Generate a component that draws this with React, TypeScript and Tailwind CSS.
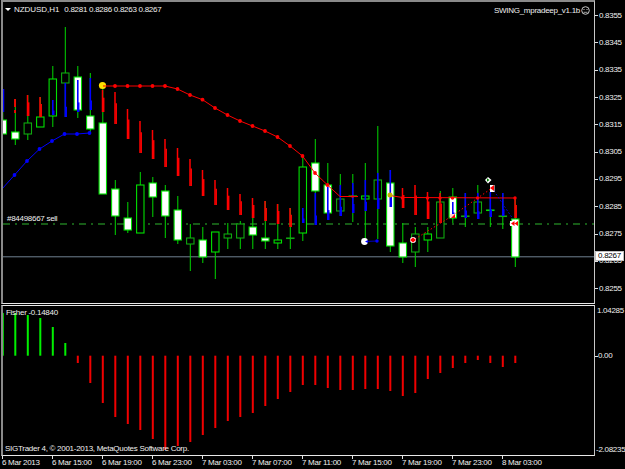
const font = { fontFamily: '"Liberation Sans", Arial, sans-serif' };

// i: bar index, h/l: wick ends, t/b: body ends (all in page pixels)
type Candle = { i: number; h: number; t: number; b: number; l: number; fill?: boolean; dark?: boolean };

const barX = (i: number) => 2.8 + i * 12.5;

const candles: Candle[] = [
  { i: 0, h: 112, t: 120, b: 134, l: 134, fill: true },
  { i: 1, h: 99, t: 132, b: 139, l: 145, fill: true },
  { i: 2, h: 95, t: 123, b: 134, l: 140, dark: true },
  { i: 3, h: 97, t: 117, b: 127, l: 127 },
  { i: 4, h: 66, t: 79, b: 116, l: 127 },
  { i: 5, h: 27, t: 73, b: 83, l: 117, dark: true },
  { i: 6, h: 66, t: 77, b: 110, l: 118, fill: true },
  { i: 7, h: 73, t: 116, b: 129, l: 133, fill: true },
  { i: 8, h: 86, t: 123, b: 194, l: 194, fill: true },
  { i: 9, h: 180, t: 189, b: 216, l: 235, fill: true },
  { i: 10, h: 202, t: 218, b: 230, l: 233, fill: true },
  { i: 11, h: 172, t: 185, b: 233, l: 233 },
  { i: 12, h: 177, t: 183, b: 197, l: 217, fill: true },
  { i: 13, h: 185, t: 191, b: 216, l: 238, fill: true },
  { i: 14, h: 196, t: 210, b: 240, l: 244, fill: true },
  { i: 15, h: 224, t: 238, b: 244, l: 271, dark: true },
  { i: 16, h: 227, t: 240, b: 257, l: 263, fill: true },
  { i: 17, h: 232, t: 232, b: 252, l: 279 },
  { i: 18, h: 223, t: 234, b: 238, l: 249, dark: true },
  { i: 19, h: 221, t: 224, b: 238, l: 249, dark: true },
  { i: 20, h: 206, t: 227, b: 235, l: 249, fill: true },
  { i: 21, h: 201, t: 238, b: 241, l: 249, fill: true },
  { i: 22, h: 204, t: 240, b: 243, l: 249 },
  { i: 23, h: 208, t: 238, b: 238.5, l: 249, dark: true },
  { i: 24, h: 157, t: 167, b: 233, l: 241 },
  { i: 25, h: 139, t: 163, b: 191, l: 225, fill: true },
  { i: 26, h: 163, t: 185, b: 213, l: 220, fill: true },
  { i: 27, h: 174, t: 199, b: 211, l: 216, dark: true },
  { i: 28, h: 174, t: 196, b: 196.5, l: 222 },
  { i: 29, h: 163, t: 196, b: 199, l: 243 },
  { i: 30, h: 126, t: 180, b: 199, l: 239, dark: true },
  { i: 31, h: 170, t: 183, b: 246, l: 252, fill: true },
  { i: 32, h: 223, t: 243, b: 257, l: 263, fill: true },
  { i: 33, h: 227, t: 234, b: 252, l: 267, dark: true },
  { i: 34, h: 227, t: 234, b: 240, l: 252 },
  { i: 35, h: 191, t: 202, b: 238, l: 238, dark: true },
  { i: 36, h: 188, t: 197, b: 218, l: 223, fill: true },
  { i: 37, h: 193, t: 216, b: 216.5, l: 227, dark: true },
  { i: 38, h: 185, t: 202, b: 213, l: 213, dark: true },
  { i: 39, h: 192, t: 210, b: 210.5, l: 227 },
  { i: 40, h: 193, t: 216, b: 216.5, l: 229, dark: true },
  { i: 41, h: 198, t: 219, b: 257, l: 267, fill: true },
];

const redBars: [number, number, number][] = [
  [2, 95, 116], [3, 97, 117], [8, 90, 112], [9, 92, 124], [10, 109, 139], [11, 121, 153],
  [12, 130, 159], [13, 139, 167], [14, 148, 176], [15, 159, 186], [16, 170, 196], [17, 180, 205],
  [18, 188, 210], [19, 194, 215], [20, 198, 218], [21, 201, 221], [22, 204, 224], [23, 208, 227],
  [32, 188, 208], [33, 185, 215], [34, 192, 219], [35, 193, 223], [41, 198, 218],
];

const blueBars: [number, number, number][] = [
  [4, 100, 115], [5, 83, 117], [6, 80, 112], [7, 78, 110], [24, 208, 223], [25, 193, 225],
  [26, 187, 220], [27, 185, 216], [28, 183, 213], [29, 180, 211], [30, 173, 209], [31, 170, 207],
  [36, 202, 217], [37, 193, 218], [38, 193, 219], [39, 192, 217], [40, 193, 216],
];

const redLine: [number, number][] = [
  [102.7, 86], [115, 86], [127.5, 86], [140, 86], [152.5, 86], [165, 86], [177.5, 89], [190, 95],
  [202.5, 99.7], [215, 108], [227.5, 115], [240, 121], [252.5, 126], [265, 131], [277.5, 137],
  [290, 146], [302.5, 156], [315, 173], [327.5, 185],
];

const blueLine: [number, number][] = [
  [2, 189], [14.5, 175], [27, 161], [39.5, 149], [52, 141], [64.5, 134], [77, 134], [89.5, 133],
];

const fisher: number[] = [
  313, 313, 315, 318, 327, 343, 363, 383, 403, 417, 424, 430, 439, 450, 446, 442, 435, 428, 421,
  417, 413, 406, 399, 392, 385, 385, 388, 390, 390, 389, 389, 391, 396, 393, 379, 373, 368, 363,
  360, 363, 367, 363,
];

const priceLabels = [
  "0.8355", "0.8345", "0.8335", "0.8325", "0.8315", "0.8305",
  "0.8295", "0.8285", "0.8275", "0.8265", "0.8255",
];

const timeLabels = [
  "6 Mar 2013", "6 Mar 15:00", "6 Mar 19:00", "6 Mar 23:00", "7 Mar 03:00", "7 Mar 07:00",
  "7 Mar 11:00", "7 Mar 15:00", "7 Mar 19:00", "7 Mar 23:00", "8 Mar 03:00",
];

const points = (pts: [number, number][]) => pts.map((p) => p.join(",")).join(" ");

function PriceChart() {
  return (
    <svg viewBox="3 2 591 301" className="block w-[591px] h-[301px]">
      {/* Trade and bid lines */}
      <line x1="3" x2="594" y1="224" y2="224" stroke="#1f7a1f" strokeWidth="1.4" strokeDasharray="7 5 2 5" />
      <line x1="3" x2="594" y1="256.8" y2="256.8" stroke="#708090" strokeWidth="1" />

      {candles.map((c) => {
        const x = barX(c.i);
        const stroke = c.dark ? "#0fa80f" : "#00e000";
        return (
          <g key={c.i}>
            <line x1={x} x2={x} y1={c.h} y2={c.l} stroke="#00d800" strokeWidth="1" />
            <rect
              x={x - 3.7}
              y={c.t}
              width="7.4"
              height={c.b - c.t}
              fill={c.fill ? "#ffffff" : "#000000"}
              stroke={stroke}
              strokeWidth="1.1"
            />
          </g>
        );
      })}

      {redBars.map(([i, top, bottom]) => (
        <g key={i} stroke="#ff0000" strokeWidth="1.5">
          <line x1={barX(i) - 0.3} x2={barX(i) - 0.3} y1={top} y2={bottom} />
          <line x1={barX(i) + 0.9} x2={barX(i) + 0.9} y1={top + (bottom - top) * 0.35} y2={bottom} />
        </g>
      ))}
      <g stroke="#ff0000" strokeWidth="1.8">
        <line x1="15" x2="15" y1="99" y2="107" />
        <line x1="15" x2="15" y1="110" y2="113" />
      </g>

      {blueBars.map(([i, top, bottom]) => (
        <g key={i} stroke="#0000ff" strokeWidth="1.6">
          <line x1={barX(i)} x2={barX(i)} y1={top} y2={bottom} />
          <line x1={barX(i) + 0.9} x2={barX(i) + 0.9} y1={bottom - (bottom - top) * 0.3} y2={bottom} />
        </g>
      ))}
      <line x1="3.5" x2="3.5" y1="89" y2="112" stroke="#0000ff" strokeWidth="1.5" />

      {/* Swing lines */}
      <polyline points={points(blueLine)} fill="none" stroke="#0000ff" strokeWidth="1" />
      {blueLine.slice(1).map(([x, y]) => (
        <circle key={x} cx={x} cy={y} r="1.9" fill="#0000ff" />
      ))}
      <polyline points={points(redLine)} fill="none" stroke="#ff0000" strokeWidth="1" />
      {redLine.slice(1).map(([x, y]) => (
        <circle key={x} cx={x} cy={y} r="1.9" fill="#ff0000" />
      ))}
      <polyline points="327.5,185 340,196.5 358,196.5" fill="none" stroke="#ff0000" strokeWidth="1" />
      <circle cx="352.5" cy="196.5" r="1.3" fill="#ff0000" />
      <polyline points="390,195.5 402.5,197.5 409,197.5 515,198" fill="none" stroke="#ff0000" strokeWidth="1" />
      {[402.5, 427.5, 440, 452.5, 477.5, 515].map((x) => (
        <circle key={x} cx={x} cy="198" r="1.7" fill="#ff0000" />
      ))}

      {/* Dotted entry legs */}
      <polyline points="415,239 452,216 492,188" fill="none" stroke="#ff0000" strokeWidth="1" strokeDasharray="1.5 2.2" />
      <polyline points="492,188 513,219" fill="none" stroke="#0000ff" strokeWidth="1" strokeDasharray="1.5 2.2" />
      <line x1="364" x2="377" y1="241.5" y2="241" stroke="#0000c0" strokeWidth="1" />

      {/* Markers */}
      <circle cx="102.5" cy="85.5" r="3.6" fill="#ffe000" />
      <line x1="103" x2="106" y1="86" y2="86" stroke="#ff0000" strokeWidth="1" />
      <circle cx="390" cy="195" r="2.5" fill="#c8b000" />
      <circle cx="364.5" cy="241.5" r="3.4" fill="#ffffff" />
      <path d="M365 241.5 L368 240 L368 243 Z" fill="#0000ff" />
      <circle cx="377" cy="241" r="1.7" fill="#0000ff" />
      <circle cx="413" cy="240" r="3" fill="#ffffff" />
      <path d="M410 240 L413 237.5 L416 240 L413 242.5 Z" fill="#ff0000" />
      <path d="M488 177 L491.5 180 L488 183.5 L485 180 Z" fill="#ffffff" />
      <path d="M489.5 180 L487 178.3 L487 181.7 Z" fill="#008000" />
      <rect x="490" y="185" width="4.5" height="7" fill="#ffffff" />
      <path d="M494 185 L494 191 L490 188 Z" fill="#ff0000" />
      <rect x="450" y="214" width="5" height="4" fill="#ffd0d0" />
      <path d="M451 218 L455 214 L455 218 Z" fill="#ff0000" />
      <rect x="510" y="221" width="8" height="5" fill="#ffffff" />
      <path d="M511 223.5 L514.5 221 L514.5 226 Z M518 221 L514.5 223.5 L518 226 Z" fill="#ff0000" />
    </svg>
  );
}

function FisherChart() {
  const zero = 355.7;
  return (
    <svg viewBox="3 306 591 149" className="block w-[591px] h-[149px]">
      {fisher.map((y, i) => (
        <rect
          key={i}
          x={barX(i) - 1}
          y={Math.min(y, zero)}
          width="2"
          height={Math.abs(y - zero)}
          fill={y < zero ? "#00f000" : "#f00000"}
        />
      ))}
    </svg>
  );
}

export default function App() {
  return (
    <div
      style={font}
      className="w-[625px] h-[469px] bg-black text-[8px] tracking-[-0.28px] leading-none text-[#f0f0f0] overflow-hidden"
    >
      {/* Price pane */}
      <div className="flex h-[304px]">
        <div className="relative ml-[1px] w-[594px] border-l-2 border-t-2 border-r border-b border-l-[#8a8a8a] border-t-[#8a8a8a] border-r-[#c8c8c8] border-b-[#e8e8e8]">
          <PriceChart />
          <div className="absolute left-[2px] right-[4px] top-[2px] flex items-center justify-between">
            <div className="flex items-center">
              <span className="w-0 h-0 border-x-[3px] border-x-transparent border-t-[3px] border-t-white" />
              <span className="ml-[3px] tracking-[-0.05px]">NZDUSD,H1</span>
              <span className="ml-[5px]">0.8281 0.8286 0.8263 0.8267</span>
            </div>
            <div className="flex items-center mt-[2px]">
              <span>SWING_mpradeep_v1.1b</span>
              <svg viewBox="0 0 9 9" className="ml-[1px] w-[9px] h-[9px]">
                <circle cx="4.5" cy="4.5" r="3.8" fill="none" stroke="#c8c8c8" strokeWidth="1" />
                <rect x="2.5" y="3" width="1" height="1" fill="#c8c8c8" />
                <rect x="5.5" y="3" width="1" height="1" fill="#c8c8c8" />
                <path d="M2.5 6.3 H6.5" stroke="#c8c8c8" strokeWidth="0.8" />
              </svg>
            </div>
          </div>
          <span className="absolute left-[4px] top-[213px]">#84498667 sell</span>
        </div>
        <div className="relative flex-1 pt-[2px]">
          {priceLabels.map((label) => (
            <div key={label} className="flex h-[27.3px] items-center">
              <span className="w-[3px] h-px bg-[#e0e0e0]" />
              <span className="ml-[1px]">{label}</span>
            </div>
          ))}
          <span className="absolute left-[0px] top-[251px] w-[29px] h-[10px] bg-white text-black flex items-center justify-center border border-[#c0c0c0]">
            0.8267
          </span>
        </div>
      </div>

      {/* Fisher pane */}
      <div className="flex h-[151px] mt-[1px]">
        <div className="relative ml-[1px] w-[594px] border-l-2 border-t border-r border-b border-l-[#8a8a8a] border-t-[#e8e8e8] border-r-[#c8c8c8] border-b-[#e8e8e8]">
          <FisherChart />
          <span className="absolute left-[3px] top-[3px]">Fisher -0.14840</span>
          <span className="absolute left-[2px] bottom-[2px]">
            SIGTrader 4, © 2001-2013, MetaQuotes Software Corp.
          </span>
        </div>
        <div className="flex-1 relative">
          <span className="absolute left-[2px] top-[2px]">1.04285</span>
          <div className="absolute left-0 top-[47px] flex items-center">
            <span className="w-[3px] h-px bg-[#e0e0e0]" />
            <span>0.00</span>
          </div>
          <span className="absolute left-[1px] top-[141px]">-2.08235</span>
        </div>
      </div>

      {/* Time axis */}
      <div className="flex h-[13px] pl-[2px]">
        {timeLabels.map((label) => (
          <div key={label} className="relative w-[50px] shrink-0">
            <span className="block w-px h-[3px] bg-[#e0e0e0]" />
            <span className="absolute left-0 top-[3px] whitespace-nowrap">{label}</span>
          </div>
        ))}
      </div>
    </div>
  );
}
